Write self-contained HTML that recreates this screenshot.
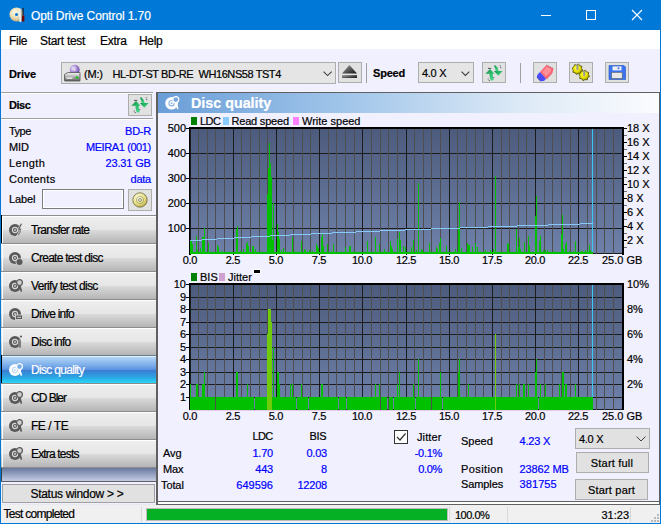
<!DOCTYPE html><html><head><meta charset="utf-8"><style>
html,body{margin:0;padding:0;width:661px;height:524px;overflow:hidden;background:#f0f0ff;position:relative;font-family:"Liberation Sans",sans-serif}
.t{position:absolute;white-space:nowrap;line-height:1;-webkit-text-stroke:0.2px currentColor}
svg{display:block}
</style></head><body>
<div style="position:absolute;left:0px;top:0px;width:661px;height:30px;background:#0078d7"></div>
<svg style="position:absolute;left:5px;top:3px" width="24" height="24" viewBox="0 0 24 24"><defs><radialGradient id="cdg" cx="40%" cy="35%" r="70%"><stop offset="0" stop-color="#fffbe8"/><stop offset="0.55" stop-color="#eadbb0"/><stop offset="1" stop-color="#c0a870"/></radialGradient></defs>
<circle cx="11.5" cy="11.5" r="7" fill="url(#cdg)"/>
<path d="M11.5 4.5 L13 11.5 L11.5 18.5 Z" fill="#fff8e0" opacity="0.5"/>
<circle cx="11.5" cy="11.5" r="1.5" fill="#0078d7"/>
<path d="M13.4 6 L15.8 5.6 L16.2 19 L14.4 19 Z" fill="#ececec"/>
<path d="M15.8 5.6 L16.6 5.6 L16.8 19 L16.2 19 Z" fill="#9a9a9a"/>
<rect x="17.3" y="5" width="1.6" height="7.5" fill="#203050"/>
<rect x="17" y="12.5" width="2.4" height="6" fill="#700808"/></svg>
<div class="t" style="top:9.84px;font-size:12px;color:#fff;letter-spacing:-0.1px;left:31px;">Opti Drive Control 1.70</div>
<div style="position:absolute;left:541px;top:15px;width:10px;height:1px;background:#fff"></div>
<div style="position:absolute;left:586px;top:10px;width:10px;height:10px;border:1px solid #fff;box-sizing:border-box"></div>
<svg style="position:absolute;left:631px;top:9px" width="12" height="12" viewBox="0 0 12 12"><path d="M1 1L11 11M11 1L1 11" stroke="#fff" stroke-width="1.1"/></svg>
<div style="position:absolute;left:1px;top:30px;width:659px;height:19px;background:#fff"></div>
<div class="t" style="top:34.84px;font-size:12px;color:#000;letter-spacing:-0.3px;left:9px;">File</div>
<div class="t" style="top:34.84px;font-size:12px;color:#000;letter-spacing:-0.3px;left:40px;">Start test</div>
<div class="t" style="top:34.84px;font-size:12px;color:#000;letter-spacing:-0.3px;left:100px;">Extra</div>
<div class="t" style="top:34.84px;font-size:12px;color:#000;letter-spacing:-0.3px;left:139px;">Help</div>
<div style="position:absolute;left:1px;top:49px;width:659px;height:43px;background:#f0f0ff"></div>
<div class="t" style="top:68.89px;font-size:11px;color:#000;font-weight:bold;letter-spacing:-0.1px;left:9px;">Drive</div>
<div style="position:absolute;left:61px;top:62px;width:275px;height:22px;background:#e5e5e5;border:1px solid #adadad;box-sizing:border-box"></div>
<svg style="position:absolute;left:62px;top:63px" width="20" height="20" viewBox="0 0 20 20"><defs><linearGradient id="drv" x1="0" y1="0" x2="0" y2="1"><stop offset="0" stop-color="#f8f8f8"/><stop offset="0.5" stop-color="#b0b0b0"/><stop offset="1" stop-color="#606060"/></linearGradient>
<radialGradient id="pd" cx="35%" cy="35%" r="70%"><stop offset="0" stop-color="#f0e8ff"/><stop offset="0.6" stop-color="#a080d0"/><stop offset="1" stop-color="#6850a0"/></radialGradient></defs>
<circle cx="12.7" cy="6.8" r="5" fill="url(#pd)"/><circle cx="12.7" cy="6.8" r="1" fill="#e5e5e5"/>
<path d="M3 11 L6 9.5 L18 9.5 L18 17.5 Q18 18 17.5 18 L3 18 Q2.5 18 2.5 17.5 L2.5 11.5 Z" fill="url(#drv)" stroke="#505050" stroke-width="0.8"/>
<rect x="4.5" y="14.5" width="6" height="1.2" fill="#fff"/>
<path d="M14.5 13h1v1h1v1h-1v1h-1v-1h-1v-1h1z" fill="#10c010"/></svg>
<div class="t" style="top:68.69px;font-size:11px;color:#000;letter-spacing:-0.2px;left:84px;">(M:)</div>
<div class="t" style="top:68.69px;font-size:11px;color:#000;letter-spacing:-0.42px;left:112.5px;">HL-DT-ST BD-RE&nbsp; WH16NS58 TST4</div>
<svg style="position:absolute;left:322.5px;top:71.2px" width="10" height="6" viewBox="0 0 10 6"><path d="M0.5 0.6L4.6 4.6L8.7 0.6" stroke="#404040" fill="none" stroke-width="1.1"/></svg>
<div style="position:absolute;left:338px;top:62px;width:24px;height:21px;background:#e1e1e1;border:1px solid #adadad;box-sizing:border-box"></div>
<svg style="position:absolute;left:338px;top:62px" width="24" height="21" viewBox="0 0 24 21"><defs><linearGradient id="ej" x1="0" y1="0" x2="1" y2="1"><stop offset="0" stop-color="#a8a8a8"/><stop offset="1" stop-color="#101010"/></linearGradient></defs>
<path d="M11.4 3 L19 11.4 H4 Z" fill="url(#ej)"/><rect x="4" y="13" width="15" height="3" fill="url(#ej)"/></svg>
<div style="position:absolute;left:366px;top:63px;width:1px;height:20px;background:#a0a0a0"></div>
<div class="t" style="top:68.39px;font-size:11px;color:#000;font-weight:bold;letter-spacing:-0.2px;left:373px;">Speed</div>
<div style="position:absolute;left:418px;top:62px;width:56px;height:21px;background:#e5e5e5;border:1px solid #adadad;box-sizing:border-box"></div>
<div class="t" style="top:67.69px;font-size:11px;color:#000;letter-spacing:-0.3px;left:422px;">4.0 X</div>
<svg style="position:absolute;left:460.6px;top:70.6px" width="10" height="6" viewBox="0 0 10 6"><path d="M0.5 0.6L4.4 4.4L8.3 0.6" stroke="#404040" fill="none" stroke-width="1.1"/></svg>
<div style="position:absolute;left:482px;top:62px;width:24px;height:21px;background:#e1e1e1;border:1px solid #adadad;box-sizing:border-box"></div>
<svg style="position:absolute;left:482px;top:62px" width="24" height="22" viewBox="0 0 24 22"><defs><linearGradient id="rf1" x1="0" y1="0" x2="1" y2="1"><stop offset="0" stop-color="#128048"/><stop offset="0.45" stop-color="#2ab868"/><stop offset="1" stop-color="#48e090"/></linearGradient></defs>
<path d="M3.4 11.8 L8 7 L12.6 11.8 L10.6 11.8 Q10.8 15 11.8 18.2 L8.8 18.4 Q7.4 15 7.4 11.8 Z" fill="url(#rf1)"/>
<path d="M12 9 L20.6 9 L16.3 13.8 Z" fill="url(#rf1)"/>
<path d="M12.6 3 Q16 4.4 16.6 9.2 L13.8 9.2 Q13.4 6.4 12.2 4.2 Z" fill="url(#rf1)"/>
<path d="M6 6.4 h3.2" stroke="#303030" stroke-width="0.8"/>
<circle cx="18.2" cy="3.8" r="0.55" fill="#404040"/><circle cx="18.8" cy="5.6" r="0.55" fill="#404040"/>
<circle cx="6.2" cy="17" r="0.55" fill="#404040"/><circle cx="7.2" cy="18.6" r="0.55" fill="#404040"/><circle cx="11.8" cy="15.6" r="0.55" fill="#404040"/></svg>
<div style="position:absolute;left:520px;top:63px;width:1px;height:20px;background:#a0a0a0"></div>
<div style="position:absolute;left:533px;top:62px;width:24px;height:21px;background:#e1e1e1;border:1px solid #adadad;box-sizing:border-box"></div>
<svg style="position:absolute;left:533px;top:62px" width="24" height="21" viewBox="0 0 24 21"><path d="M7 10 L13.5 3 L20.5 6.5 L19.5 10.5 L13 16.8 Z" fill="#ff6474"/>
<path d="M9.2 10 L13.8 4.8 L18.4 7.2 L17.4 10 L13 14.4 Z" fill="#ff9098"/>
<path d="M13 16.8 L19.5 10.5 L20.5 6.5 L19 11.8 L13.5 17.5 Z" fill="#e85060"/>
<path d="M4 13.2 L7 10 L13 16.8 L11 19 L7.2 19.2 L4 15.6 Z" fill="#4a4af8"/>
<path d="M13.5 3 L20.5 6.5" stroke="#505050" stroke-width="0.6" stroke-dasharray="1 1"/>
<path d="M4 15.6 L7.2 19.2" stroke="#404040" stroke-width="0.6" stroke-dasharray="1 1"/></svg>
<div style="position:absolute;left:569px;top:62px;width:24px;height:21px;background:#e1e1e1;border:1px solid #adadad;box-sizing:border-box"></div>
<svg style="position:absolute;left:569px;top:62px" width="24" height="21" viewBox="0 0 24 21"><defs><radialGradient id="gy" cx="40%" cy="35%" r="65%"><stop offset="0" stop-color="#ffff40"/><stop offset="0.6" stop-color="#e8e000"/><stop offset="1" stop-color="#8c8800"/></radialGradient></defs><polygon points="13.69,8.27 11.88,9.55 11.38,11.70 9.20,11.32 7.33,12.49 6.05,10.68 3.90,10.18 4.28,8.00 3.11,6.13 4.92,4.85 5.42,2.70 7.60,3.08 9.47,1.91 10.75,3.72 12.90,4.22 12.52,6.40" fill="url(#gy)" stroke="#505000" stroke-width="0.8"/><path d="M7.300000000000001 2.6000000000000005 L9.5 2.6000000000000005 L9.3 8.0 L7.5 8.0 Z" fill="#9a9a9a"/><polygon points="20.49,14.47 18.68,15.75 18.18,17.90 16.00,17.52 14.13,18.69 12.85,16.88 10.70,16.38 11.08,14.20 9.91,12.33 11.72,11.05 12.22,8.90 14.40,9.28 16.27,8.11 17.55,9.92 19.70,10.42 19.32,12.60" fill="url(#gy)" stroke="#505000" stroke-width="0.8"/><path d="M14.1 8.8 L16.3 8.8 L16.099999999999998 14.200000000000001 L14.299999999999999 14.200000000000001 Z" fill="#9a9a9a"/></svg>
<div style="position:absolute;left:605px;top:62px;width:24px;height:21px;background:#e1e1e1;border:1px solid #adadad;box-sizing:border-box"></div>
<svg style="position:absolute;left:605px;top:62px" width="24" height="21" viewBox="0 0 24 21"><path d="M4 3.5 L19 3.5 L20.5 5 L20.5 17.5 L4 17.5 Z" fill="#3a74f0" stroke="#2050c0" stroke-width="0.6"/>
<rect x="7.5" y="4.4" width="9" height="4" fill="#f0f0f0"/><circle cx="13.5" cy="6.3" r="1" fill="#3a74f0"/>
<rect x="6.7" y="10.4" width="10.5" height="6" fill="#e8e8e8" stroke="#606060" stroke-width="0.6"/></svg>
<div style="position:absolute;left:1px;top:92px;width:155px;height:412px;background:#f0f0ff"></div>
<div style="position:absolute;left:1px;top:92px;width:152px;height:1px;background:#a0a0a0"></div>
<div style="position:absolute;left:1px;top:93px;width:152px;height:1px;background:#fff"></div>
<div class="t" style="top:100.19px;font-size:11px;color:#000;font-weight:bold;letter-spacing:-0.45px;left:9px;">Disc</div>
<div style="position:absolute;left:128px;top:94px;width:24px;height:22px;background:#e1e1e1;border:1px solid #adadad;box-sizing:border-box"></div>
<svg style="position:absolute;left:128px;top:94px" width="24" height="22" viewBox="0 0 24 22"><defs><linearGradient id="rf2" x1="0" y1="0" x2="1" y2="1"><stop offset="0" stop-color="#128048"/><stop offset="0.45" stop-color="#2ab868"/><stop offset="1" stop-color="#48e090"/></linearGradient></defs>
<path d="M3.4 11.8 L8 7 L12.6 11.8 L10.6 11.8 Q10.8 15 11.8 18.2 L8.8 18.4 Q7.4 15 7.4 11.8 Z" fill="url(#rf2)"/>
<path d="M12 9 L20.6 9 L16.3 13.8 Z" fill="url(#rf2)"/>
<path d="M12.6 3 Q16 4.4 16.6 9.2 L13.8 9.2 Q13.4 6.4 12.2 4.2 Z" fill="url(#rf2)"/>
<path d="M6 6.4 h3.2" stroke="#303030" stroke-width="0.8"/>
<circle cx="18.2" cy="3.8" r="0.55" fill="#404040"/><circle cx="18.8" cy="5.6" r="0.55" fill="#404040"/>
<circle cx="6.2" cy="17" r="0.55" fill="#404040"/><circle cx="7.2" cy="18.6" r="0.55" fill="#404040"/><circle cx="11.8" cy="15.6" r="0.55" fill="#404040"/></svg>
<div style="position:absolute;left:1px;top:118px;width:152px;height:1px;background:#a0a0a0"></div>
<div style="position:absolute;left:1px;top:119px;width:152px;height:1px;background:#fff"></div>
<div class="t" style="top:125.69px;font-size:11px;color:#000;letter-spacing:-0.5px;left:9px;">Type</div>
<div class="t" style="top:125.69px;font-size:11px;color:#0000ff;letter-spacing:-0.3px;right:510.2px;text-align:right;">BD-R</div>
<div class="t" style="top:141.69px;font-size:11px;color:#000;letter-spacing:-0.1px;left:9px;">MID</div>
<div class="t" style="top:141.69px;font-size:11px;color:#0000ff;letter-spacing:-0.4px;right:510.2px;text-align:right;">MEIRA1 (001)</div>
<div class="t" style="top:158.49px;font-size:11px;color:#000;letter-spacing:0.45px;left:9px;">Length</div>
<div class="t" style="top:158.49px;font-size:11px;color:#0000ff;letter-spacing:-0.15px;right:510.2px;text-align:right;">23.31 GB</div>
<div class="t" style="top:174.49px;font-size:11px;color:#000;letter-spacing:0.3px;left:9px;">Contents</div>
<div class="t" style="top:174.49px;font-size:11px;color:#0000ff;letter-spacing:-0.3px;right:510.2px;text-align:right;">data</div>
<div class="t" style="top:193.69px;font-size:11px;color:#000;letter-spacing:-0.1px;left:9px;">Label</div>
<div style="position:absolute;left:42px;top:189px;width:82px;height:20px;background:#f0f0ff;border:1px solid #7c7c7c;box-shadow:inset 0 0 0 1px #fff;box-sizing:border-box"></div>
<div style="position:absolute;left:128px;top:189px;width:24px;height:22px;background:#e1e1e1;border:1px solid #adadad;box-sizing:border-box"></div>
<svg style="position:absolute;left:128px;top:189px" width="24" height="22" viewBox="0 0 24 22"><defs><radialGradient id="ycd" cx="40%" cy="35%" r="70%"><stop offset="0" stop-color="#fffff0"/><stop offset="0.6" stop-color="#e8e088"/><stop offset="1" stop-color="#b0a040"/></radialGradient></defs>
<circle cx="12" cy="11" r="7.2" fill="url(#ycd)" stroke="#606030" stroke-width="0.7"/>
<circle cx="12" cy="11" r="3.6" fill="none" stroke="#8a8a40" stroke-width="0.6"/>
<circle cx="12" cy="11" r="1.5" fill="#e1e1e1" stroke="#606030" stroke-width="0.6"/></svg>
<div style="position:absolute;left:1px;top:215px;width:155px;height:1px;background:#8c8c8c"></div>
<div style="position:absolute;left:1px;top:216px;width:155px;height:1px;background:#fff"></div>
<div style="position:absolute;left:1px;top:217px;width:155px;height:26px;background:linear-gradient(#eeeeee 0%,#e6e6e6 48%,#d9d9d9 52%,#b5b5b5 100%)"></div>
<div style="position:absolute;left:2px;top:216px;width:1px;height:27px;background:#fff"></div>
<div style="position:absolute;left:1px;top:215px;width:1px;height:28px;background:#000"></div>
<svg style="position:absolute;left:7.5px;top:221.5px" width="16" height="16" viewBox="0 0 16 16"><circle cx="7" cy="8" r="6" fill="#5a5a5a"/><circle cx="7" cy="8" r="2.6" fill="none" stroke="#d8d8d8" stroke-width="1.1"/><circle cx="7" cy="8" r="0.9" fill="#d8d8d8"/><path d="M12.5 1.5 L9.5 8 L11.5 8 L8.5 14.5 L14 6.5 L12 6.5 L14.5 1.5 Z" fill="#5a5a5a" stroke="#e8e8e8" stroke-width="0.6"/></svg>
<div class="t" style="top:223.84px;font-size:12px;color:#000;letter-spacing:-0.77px;left:31px;">Transfer rate</div>
<div style="position:absolute;left:1px;top:243px;width:155px;height:1px;background:#8c8c8c"></div>
<div style="position:absolute;left:1px;top:244px;width:155px;height:1px;background:#fff"></div>
<div style="position:absolute;left:1px;top:245px;width:155px;height:26px;background:linear-gradient(#eeeeee 0%,#e6e6e6 48%,#d9d9d9 52%,#b5b5b5 100%)"></div>
<div style="position:absolute;left:2px;top:244px;width:1px;height:27px;background:#fff"></div>
<svg style="position:absolute;left:7.5px;top:249.5px" width="16" height="16" viewBox="0 0 16 16"><circle cx="7" cy="8" r="6" fill="#5a5a5a"/><circle cx="7" cy="8" r="2.6" fill="none" stroke="#d8d8d8" stroke-width="1.1"/><circle cx="7" cy="8" r="0.9" fill="#d8d8d8"/><circle cx="11.5" cy="12" r="3.6" fill="#5a5a5a" stroke="#e0e0e0" stroke-width="0.8"/></svg>
<div class="t" style="top:251.84px;font-size:12px;color:#000;letter-spacing:-0.73px;left:31px;">Create test disc</div>
<div style="position:absolute;left:1px;top:271px;width:155px;height:1px;background:#8c8c8c"></div>
<div style="position:absolute;left:1px;top:272px;width:155px;height:1px;background:#fff"></div>
<div style="position:absolute;left:1px;top:273px;width:155px;height:26px;background:linear-gradient(#eeeeee 0%,#e6e6e6 48%,#d9d9d9 52%,#b5b5b5 100%)"></div>
<div style="position:absolute;left:2px;top:272px;width:1px;height:27px;background:#fff"></div>
<svg style="position:absolute;left:7.5px;top:277.5px" width="16" height="16" viewBox="0 0 16 16"><circle cx="7" cy="8" r="6" fill="#5a5a5a"/><circle cx="7" cy="8" r="2.6" fill="none" stroke="#d8d8d8" stroke-width="1.1"/><circle cx="7" cy="8" r="0.9" fill="#d8d8d8"/><path d="M11.6 7 L13.4 13.6" stroke="#5a5a5a" stroke-width="1.7"/><circle cx="11.5" cy="4.6" r="2.9" fill="#d0d0d0" stroke="#5a5a5a" stroke-width="1.2"/></svg>
<div class="t" style="top:279.84px;font-size:12px;color:#000;letter-spacing:-0.67px;left:31px;">Verify test disc</div>
<div style="position:absolute;left:1px;top:299px;width:155px;height:1px;background:#8c8c8c"></div>
<div style="position:absolute;left:1px;top:300px;width:155px;height:1px;background:#fff"></div>
<div style="position:absolute;left:1px;top:301px;width:155px;height:26px;background:linear-gradient(#eeeeee 0%,#e6e6e6 48%,#d9d9d9 52%,#b5b5b5 100%)"></div>
<div style="position:absolute;left:2px;top:300px;width:1px;height:27px;background:#fff"></div>
<svg style="position:absolute;left:7.5px;top:305.5px" width="16" height="16" viewBox="0 0 16 16"><circle cx="7" cy="8" r="6" fill="#5a5a5a"/><circle cx="7" cy="8" r="2.6" fill="none" stroke="#d8d8d8" stroke-width="1.1"/><circle cx="7" cy="8" r="0.9" fill="#d8d8d8"/><rect x="7.5" y="9" width="7" height="4.5" fill="#5a5a5a" stroke="#e0e0e0" stroke-width="0.8"/><rect x="9" y="10.8" width="4" height="0.9" fill="#e0e0e0"/></svg>
<div class="t" style="top:307.84px;font-size:12px;color:#000;letter-spacing:-0.77px;left:31px;">Drive info</div>
<div style="position:absolute;left:1px;top:327px;width:155px;height:1px;background:#8c8c8c"></div>
<div style="position:absolute;left:1px;top:328px;width:155px;height:1px;background:#fff"></div>
<div style="position:absolute;left:1px;top:329px;width:155px;height:26px;background:linear-gradient(#eeeeee 0%,#e6e6e6 48%,#d9d9d9 52%,#b5b5b5 100%)"></div>
<div style="position:absolute;left:2px;top:328px;width:1px;height:27px;background:#fff"></div>
<svg style="position:absolute;left:7.5px;top:333.5px" width="16" height="16" viewBox="0 0 16 16"><circle cx="7" cy="8" r="6" fill="#5a5a5a"/><circle cx="7" cy="8" r="2.6" fill="none" stroke="#d8d8d8" stroke-width="1.1"/><circle cx="7" cy="8" r="0.9" fill="#d8d8d8"/><rect x="11" y="6" width="2" height="8" fill="#5a5a5a" stroke="#e0e0e0" stroke-width="0.5"/><circle cx="13" cy="2.5" r="1.1" fill="#5a5a5a"/></svg>
<div class="t" style="top:335.84px;font-size:12px;color:#000;letter-spacing:-0.72px;left:31px;">Disc info</div>
<div style="position:absolute;left:1px;top:355px;width:155px;height:1px;background:#6a7a90"></div>
<div style="position:absolute;left:1px;top:356px;width:155px;height:1px;background:#e0f4ff"></div>
<div style="position:absolute;left:1px;top:357px;width:155px;height:26px;background:linear-gradient(#b2d6f6 0%,#7fb0ea 30%,#5c94e2 48%,#3a7ed2 52%,#2aa6e4 78%,#2ad8f8 100%)"></div>
<div style="position:absolute;left:1px;top:355px;width:1px;height:28px;background:#000"></div>
<svg style="position:absolute;left:7.5px;top:361.5px" width="16" height="16" viewBox="0 0 16 16"><circle cx="7" cy="8" r="6" fill="#ffffff"/><circle cx="7" cy="8" r="2.6" fill="none" stroke="#c0d8f4" stroke-width="1.1"/><circle cx="7" cy="8" r="0.9" fill="#c0d8f4"/><path d="M11.6 7 L13.4 13.6" stroke="#ffffff" stroke-width="1.7"/><circle cx="11.5" cy="4.6" r="2.9" fill="#7aaae4" stroke="#ffffff" stroke-width="1.2"/></svg>
<div class="t" style="top:363.84px;font-size:12px;color:#fff;letter-spacing:-0.69px;left:31px;">Disc quality</div>
<div style="position:absolute;left:1px;top:383px;width:155px;height:1px;background:#8c8c8c"></div>
<div style="position:absolute;left:1px;top:384px;width:155px;height:1px;background:#fff"></div>
<div style="position:absolute;left:1px;top:385px;width:155px;height:26px;background:linear-gradient(#eeeeee 0%,#e6e6e6 48%,#d9d9d9 52%,#b5b5b5 100%)"></div>
<div style="position:absolute;left:2px;top:384px;width:1px;height:27px;background:#fff"></div>
<svg style="position:absolute;left:7.5px;top:389.5px" width="16" height="16" viewBox="0 0 16 16"><circle cx="7" cy="8" r="6" fill="#5a5a5a"/><circle cx="7" cy="8" r="2.6" fill="none" stroke="#d8d8d8" stroke-width="1.1"/><circle cx="7" cy="8" r="0.9" fill="#d8d8d8"/><path d="M11.6 7 L13.4 13.6" stroke="#5a5a5a" stroke-width="1.7"/><circle cx="11.5" cy="4.6" r="2.9" fill="#d0d0d0" stroke="#5a5a5a" stroke-width="1.2"/></svg>
<div class="t" style="top:391.84px;font-size:12px;color:#000;letter-spacing:-1.0px;left:31px;">CD Bler</div>
<div style="position:absolute;left:1px;top:411px;width:155px;height:1px;background:#8c8c8c"></div>
<div style="position:absolute;left:1px;top:412px;width:155px;height:1px;background:#fff"></div>
<div style="position:absolute;left:1px;top:413px;width:155px;height:26px;background:linear-gradient(#eeeeee 0%,#e6e6e6 48%,#d9d9d9 52%,#b5b5b5 100%)"></div>
<div style="position:absolute;left:2px;top:412px;width:1px;height:27px;background:#fff"></div>
<svg style="position:absolute;left:7.5px;top:417.5px" width="16" height="16" viewBox="0 0 16 16"><circle cx="7" cy="8" r="6" fill="#5a5a5a"/><circle cx="7" cy="8" r="2.6" fill="none" stroke="#d8d8d8" stroke-width="1.1"/><circle cx="7" cy="8" r="0.9" fill="#d8d8d8"/><path d="M11.6 7 L13.4 13.6" stroke="#5a5a5a" stroke-width="1.7"/><circle cx="11.5" cy="4.6" r="2.9" fill="#d0d0d0" stroke="#5a5a5a" stroke-width="1.2"/></svg>
<div class="t" style="top:419.84px;font-size:12px;color:#000;letter-spacing:-0.47px;left:31px;">FE / TE</div>
<div style="position:absolute;left:1px;top:439px;width:155px;height:1px;background:#8c8c8c"></div>
<div style="position:absolute;left:1px;top:440px;width:155px;height:1px;background:#fff"></div>
<div style="position:absolute;left:1px;top:441px;width:155px;height:26px;background:linear-gradient(#eeeeee 0%,#e6e6e6 48%,#d9d9d9 52%,#b5b5b5 100%)"></div>
<div style="position:absolute;left:2px;top:440px;width:1px;height:27px;background:#fff"></div>
<svg style="position:absolute;left:7.5px;top:445.5px" width="16" height="16" viewBox="0 0 16 16"><circle cx="7" cy="8" r="6" fill="#5a5a5a"/><circle cx="7" cy="8" r="2.6" fill="none" stroke="#d8d8d8" stroke-width="1.1"/><circle cx="7" cy="8" r="0.9" fill="#d8d8d8"/><path d="M11.6 7 L13.4 13.6" stroke="#5a5a5a" stroke-width="1.7"/><circle cx="11.5" cy="4.6" r="2.9" fill="#d0d0d0" stroke="#5a5a5a" stroke-width="1.2"/></svg>
<div class="t" style="top:447.84px;font-size:12px;color:#000;letter-spacing:-0.83px;left:31px;">Extra tests</div>
<div style="position:absolute;left:1px;top:467px;width:155px;height:1px;background:#8c8c8c"></div>
<div style="position:absolute;left:1px;top:468px;width:155px;height:13px;background:linear-gradient(#6878a0,#c4cce4)"></div>
<div style="position:absolute;left:1px;top:468px;width:1px;height:13px;background:#404040"></div>
<div style="position:absolute;left:1px;top:481px;width:155px;height:1px;background:#606060"></div>
<div style="position:absolute;left:2px;top:484px;width:153px;height:19px;background:#e1e1e1;border:1px solid #a0a0a0;box-sizing:border-box"></div>
<div class="t" style="top:488.14px;font-size:12px;color:#000;letter-spacing:-0.3px;left:30.5px;">Status window &gt; &gt;</div>
<div style="position:absolute;left:156px;top:92px;width:504px;height:413px;background:#f0f0ff"></div>
<div style="position:absolute;left:156px;top:92px;width:2px;height:413px;background:#606060"></div>
<div style="position:absolute;left:156px;top:92px;width:504px;height:1px;background:#606060"></div>
<div style="position:absolute;left:659px;top:92px;width:1px;height:413px;background:#606060"></div>
<div style="position:absolute;left:156px;top:501px;width:504px;height:1px;background:#606060"></div>
<div style="position:absolute;left:158px;top:502px;width:501px;height:2px;background:#fff"></div>
<div style="position:absolute;left:156px;top:504px;width:504px;height:1px;background:#606060"></div>
<div style="position:absolute;left:158px;top:93px;width:501px;height:20px;background:linear-gradient(90deg,#6a9ed8 0%,#a2c6ea 38%,#dce9f6 72%,#fbfcfe 100%)"></div>
<svg style="position:absolute;left:163px;top:95px" width="18" height="18" viewBox="0 0 18 18"><circle cx="8.6" cy="8.2" r="6.3" fill="#fff"/><circle cx="8.6" cy="8.2" r="2.7" fill="none" stroke="#8cb6e6" stroke-width="1.1"/><circle cx="8.6" cy="8.2" r="0.9" fill="#8cb6e6"/><path d="M13 7.5 L14.8 14" stroke="#fff" stroke-width="1.6"/><circle cx="12.8" cy="4.6" r="3" fill="#7aa8de" stroke="#fff" stroke-width="1.2"/></svg>
<div class="t" style="top:96.40px;font-size:14.3px;color:#fff;font-weight:bold;left:191px;">Disc quality</div>
<svg style="position:absolute;left:0;top:0" width="661" height="524" viewBox="0 0 661 524" shape-rendering="crispEdges">
<defs>
<linearGradient id="pbg" x1="0" y1="0" x2="0" y2="1"><stop offset="0" stop-color="#4c5b7c"/><stop offset="1" stop-color="#6f81aa"/></linearGradient>
</defs>
<rect x="190" y="127" width="433" height="127" fill="url(#pbg)"/>
<rect x="190" y="228" width="433" height="1" fill="#1c1c1c"/>
<rect x="190" y="203" width="433" height="1" fill="#1c1c1c"/>
<rect x="190" y="178" width="433" height="1" fill="#1c1c1c"/>
<rect x="190" y="153" width="433" height="1" fill="#1c1c1c"/>
<rect x="190" y="253" width="433" height="1" fill="#1c1c1c"/>
<rect x="190" y="127" width="1" height="127" fill="#1c1c1c"/>
<rect x="198" y="127" width="1" height="127" fill="#4e4e4e"/>
<rect x="207" y="127" width="1" height="127" fill="#4e4e4e"/>
<rect x="215" y="127" width="1" height="127" fill="#4e4e4e"/>
<rect x="224" y="127" width="1" height="127" fill="#4e4e4e"/>
<rect x="233" y="127" width="1" height="127" fill="#1c1c1c"/>
<rect x="241" y="127" width="1" height="127" fill="#4e4e4e"/>
<rect x="250" y="127" width="1" height="127" fill="#4e4e4e"/>
<rect x="259" y="127" width="1" height="127" fill="#4e4e4e"/>
<rect x="267" y="127" width="1" height="127" fill="#4e4e4e"/>
<rect x="276" y="127" width="1" height="127" fill="#1c1c1c"/>
<rect x="285" y="127" width="1" height="127" fill="#4e4e4e"/>
<rect x="293" y="127" width="1" height="127" fill="#4e4e4e"/>
<rect x="302" y="127" width="1" height="127" fill="#4e4e4e"/>
<rect x="310" y="127" width="1" height="127" fill="#4e4e4e"/>
<rect x="319" y="127" width="1" height="127" fill="#1c1c1c"/>
<rect x="328" y="127" width="1" height="127" fill="#4e4e4e"/>
<rect x="336" y="127" width="1" height="127" fill="#4e4e4e"/>
<rect x="345" y="127" width="1" height="127" fill="#4e4e4e"/>
<rect x="354" y="127" width="1" height="127" fill="#4e4e4e"/>
<rect x="362" y="127" width="1" height="127" fill="#1c1c1c"/>
<rect x="371" y="127" width="1" height="127" fill="#4e4e4e"/>
<rect x="380" y="127" width="1" height="127" fill="#4e4e4e"/>
<rect x="388" y="127" width="1" height="127" fill="#4e4e4e"/>
<rect x="397" y="127" width="1" height="127" fill="#4e4e4e"/>
<rect x="406" y="127" width="1" height="127" fill="#1c1c1c"/>
<rect x="414" y="127" width="1" height="127" fill="#4e4e4e"/>
<rect x="423" y="127" width="1" height="127" fill="#4e4e4e"/>
<rect x="431" y="127" width="1" height="127" fill="#4e4e4e"/>
<rect x="440" y="127" width="1" height="127" fill="#4e4e4e"/>
<rect x="449" y="127" width="1" height="127" fill="#1c1c1c"/>
<rect x="457" y="127" width="1" height="127" fill="#4e4e4e"/>
<rect x="466" y="127" width="1" height="127" fill="#4e4e4e"/>
<rect x="475" y="127" width="1" height="127" fill="#4e4e4e"/>
<rect x="483" y="127" width="1" height="127" fill="#4e4e4e"/>
<rect x="492" y="127" width="1" height="127" fill="#1c1c1c"/>
<rect x="501" y="127" width="1" height="127" fill="#4e4e4e"/>
<rect x="509" y="127" width="1" height="127" fill="#4e4e4e"/>
<rect x="518" y="127" width="1" height="127" fill="#4e4e4e"/>
<rect x="526" y="127" width="1" height="127" fill="#4e4e4e"/>
<rect x="535" y="127" width="1" height="127" fill="#1c1c1c"/>
<rect x="544" y="127" width="1" height="127" fill="#4e4e4e"/>
<rect x="552" y="127" width="1" height="127" fill="#4e4e4e"/>
<rect x="561" y="127" width="1" height="127" fill="#4e4e4e"/>
<rect x="570" y="127" width="1" height="127" fill="#4e4e4e"/>
<rect x="578" y="127" width="1" height="127" fill="#1c1c1c"/>
<rect x="587" y="127" width="1" height="127" fill="#4e4e4e"/>
<rect x="596" y="127" width="1" height="127" fill="#4e4e4e"/>
<rect x="604" y="127" width="1" height="127" fill="#4e4e4e"/>
<rect x="613" y="127" width="1" height="127" fill="#4e4e4e"/>
<rect x="592" y="129" width="1" height="125" fill="#38c8f0"/>
<rect x="190" y="252" width="403" height="2" fill="#00c000"/>
<rect x="190" y="241" width="1" height="13" fill="#00c000"/>
<rect x="191" y="241" width="1" height="13" fill="#00c000"/>
<rect x="192" y="244" width="1" height="10" fill="#00c000"/>
<rect x="196" y="236" width="1" height="18" fill="#00c000"/>
<rect x="197" y="250" width="1" height="4" fill="#00c000"/>
<rect x="200" y="248" width="1" height="6" fill="#00c000"/>
<rect x="202" y="237" width="1" height="17" fill="#00c000"/>
<rect x="203" y="237" width="1" height="17" fill="#00c000"/>
<rect x="204" y="228" width="1" height="26" fill="#00c000"/>
<rect x="208" y="243" width="1" height="11" fill="#00c000"/>
<rect x="217" y="245" width="1" height="9" fill="#00c000"/>
<rect x="218" y="247" width="1" height="7" fill="#00c000"/>
<rect x="222" y="251" width="1" height="3" fill="#00c000"/>
<rect x="236" y="229" width="1" height="25" fill="#00c000"/>
<rect x="237" y="226" width="1" height="28" fill="#00c000"/>
<rect x="240" y="251" width="1" height="3" fill="#00c000"/>
<rect x="243" y="249" width="1" height="5" fill="#00c000"/>
<rect x="246" y="244" width="1" height="10" fill="#00c000"/>
<rect x="247" y="242" width="1" height="12" fill="#00c000"/>
<rect x="248" y="246" width="1" height="8" fill="#00c000"/>
<rect x="252" y="246" width="1" height="8" fill="#00c000"/>
<rect x="253" y="246" width="1" height="8" fill="#00c000"/>
<rect x="255" y="249" width="1" height="5" fill="#00c000"/>
<rect x="267" y="194" width="1" height="60" fill="#00c000"/>
<rect x="268" y="168" width="1" height="86" fill="#00c000"/>
<rect x="269" y="143" width="1" height="111" fill="#00c000"/>
<rect x="270" y="163" width="1" height="91" fill="#00c000"/>
<rect x="271" y="177" width="1" height="77" fill="#00c000"/>
<rect x="272" y="240" width="1" height="14" fill="#00c000"/>
<rect x="273" y="203" width="1" height="51" fill="#00c000"/>
<rect x="277" y="224" width="1" height="30" fill="#00c000"/>
<rect x="278" y="232" width="1" height="22" fill="#00c000"/>
<rect x="279" y="239" width="1" height="15" fill="#00c000"/>
<rect x="281" y="250" width="1" height="4" fill="#00c000"/>
<rect x="283" y="248" width="1" height="6" fill="#00c000"/>
<rect x="285" y="251" width="1" height="3" fill="#00c000"/>
<rect x="292" y="237" width="1" height="17" fill="#00c000"/>
<rect x="294" y="251" width="1" height="3" fill="#00c000"/>
<rect x="301" y="241" width="1" height="13" fill="#00c000"/>
<rect x="304" y="249" width="1" height="5" fill="#00c000"/>
<rect x="305" y="250" width="1" height="4" fill="#00c000"/>
<rect x="309" y="250" width="1" height="4" fill="#00c000"/>
<rect x="312" y="251" width="1" height="3" fill="#00c000"/>
<rect x="316" y="244" width="1" height="10" fill="#00c000"/>
<rect x="317" y="246" width="1" height="8" fill="#00c000"/>
<rect x="318" y="248" width="1" height="6" fill="#00c000"/>
<rect x="321" y="237" width="1" height="17" fill="#00c000"/>
<rect x="322" y="234" width="1" height="20" fill="#00c000"/>
<rect x="323" y="246" width="1" height="8" fill="#00c000"/>
<rect x="327" y="244" width="1" height="10" fill="#00c000"/>
<rect x="331" y="251" width="1" height="3" fill="#00c000"/>
<rect x="333" y="244" width="1" height="10" fill="#00c000"/>
<rect x="345" y="247" width="1" height="7" fill="#00c000"/>
<rect x="349" y="246" width="1" height="8" fill="#00c000"/>
<rect x="350" y="246" width="1" height="8" fill="#00c000"/>
<rect x="353" y="251" width="1" height="3" fill="#00c000"/>
<rect x="367" y="241" width="1" height="13" fill="#00c000"/>
<rect x="375" y="237" width="1" height="17" fill="#00c000"/>
<rect x="379" y="244" width="1" height="10" fill="#00c000"/>
<rect x="384" y="249" width="1" height="5" fill="#00c000"/>
<rect x="390" y="241" width="1" height="13" fill="#00c000"/>
<rect x="391" y="246" width="1" height="8" fill="#00c000"/>
<rect x="392" y="249" width="1" height="5" fill="#00c000"/>
<rect x="397" y="239" width="1" height="15" fill="#00c000"/>
<rect x="399" y="232" width="1" height="22" fill="#00c000"/>
<rect x="400" y="240" width="1" height="14" fill="#00c000"/>
<rect x="403" y="246" width="1" height="8" fill="#00c000"/>
<rect x="405" y="247" width="1" height="7" fill="#00c000"/>
<rect x="411" y="247" width="1" height="7" fill="#00c000"/>
<rect x="413" y="240" width="1" height="14" fill="#00c000"/>
<rect x="416" y="250" width="1" height="4" fill="#00c000"/>
<rect x="418" y="183" width="1" height="71" fill="#00c000"/>
<rect x="421" y="249" width="1" height="5" fill="#00c000"/>
<rect x="422" y="250" width="1" height="4" fill="#00c000"/>
<rect x="425" y="252" width="1" height="2" fill="#00c000"/>
<rect x="429" y="243" width="1" height="11" fill="#00c000"/>
<rect x="436" y="247" width="1" height="7" fill="#00c000"/>
<rect x="437" y="249" width="1" height="5" fill="#00c000"/>
<rect x="439" y="243" width="1" height="11" fill="#00c000"/>
<rect x="440" y="238" width="1" height="16" fill="#00c000"/>
<rect x="446" y="246" width="1" height="8" fill="#00c000"/>
<rect x="455" y="249" width="1" height="5" fill="#00c000"/>
<rect x="458" y="227" width="1" height="27" fill="#00c000"/>
<rect x="459" y="202" width="1" height="52" fill="#00c000"/>
<rect x="461" y="248" width="1" height="6" fill="#00c000"/>
<rect x="467" y="243" width="1" height="11" fill="#00c000"/>
<rect x="468" y="245" width="1" height="9" fill="#00c000"/>
<rect x="469" y="245" width="1" height="9" fill="#00c000"/>
<rect x="472" y="247" width="1" height="7" fill="#00c000"/>
<rect x="475" y="243" width="1" height="11" fill="#00c000"/>
<rect x="477" y="247" width="1" height="7" fill="#00c000"/>
<rect x="485" y="250" width="1" height="4" fill="#00c000"/>
<rect x="490" y="250" width="1" height="4" fill="#00c000"/>
<rect x="493" y="249" width="1" height="5" fill="#00c000"/>
<rect x="495" y="176" width="1" height="78" fill="#00c000"/>
<rect x="507" y="243" width="1" height="11" fill="#00c000"/>
<rect x="508" y="244" width="1" height="10" fill="#00c000"/>
<rect x="516" y="229" width="1" height="25" fill="#00c000"/>
<rect x="518" y="247" width="1" height="7" fill="#00c000"/>
<rect x="519" y="238" width="1" height="16" fill="#00c000"/>
<rect x="520" y="249" width="1" height="5" fill="#00c000"/>
<rect x="524" y="242" width="1" height="12" fill="#00c000"/>
<rect x="528" y="236" width="1" height="18" fill="#00c000"/>
<rect x="529" y="246" width="1" height="8" fill="#00c000"/>
<rect x="535" y="216" width="1" height="38" fill="#00c000"/>
<rect x="536" y="196" width="1" height="58" fill="#00c000"/>
<rect x="539" y="241" width="1" height="13" fill="#00c000"/>
<rect x="540" y="236" width="1" height="18" fill="#00c000"/>
<rect x="543" y="250" width="1" height="4" fill="#00c000"/>
<rect x="545" y="250" width="1" height="4" fill="#00c000"/>
<rect x="547" y="250" width="1" height="4" fill="#00c000"/>
<rect x="554" y="251" width="1" height="3" fill="#00c000"/>
<rect x="561" y="234" width="1" height="20" fill="#00c000"/>
<rect x="562" y="215" width="1" height="39" fill="#00c000"/>
<rect x="563" y="249" width="1" height="5" fill="#00c000"/>
<rect x="565" y="244" width="1" height="10" fill="#00c000"/>
<rect x="566" y="242" width="1" height="12" fill="#00c000"/>
<rect x="569" y="251" width="1" height="3" fill="#00c000"/>
<rect x="573" y="251" width="1" height="3" fill="#00c000"/>
<rect x="575" y="241" width="1" height="13" fill="#00c000"/>
<rect x="582" y="251" width="1" height="3" fill="#00c000"/>
<rect x="585" y="250" width="1" height="4" fill="#00c000"/>
<rect x="581" y="251" width="1" height="3" fill="#00c000"/>
<rect x="587" y="250" width="1" height="4" fill="#00c000"/>
<rect x="589" y="245" width="1" height="9" fill="#00c000"/>
<rect x="590" y="250" width="1" height="4" fill="#00c000"/>
<rect x="190" y="240" width="12" height="1" fill="#88c8f4"/>
<rect x="202" y="239" width="15" height="1" fill="#88c8f4"/>
<rect x="217" y="238" width="17" height="1" fill="#88c8f4"/>
<rect x="234" y="237" width="17" height="1" fill="#88c8f4"/>
<rect x="251" y="236" width="19" height="1" fill="#88c8f4"/>
<rect x="270" y="235" width="20" height="1" fill="#88c8f4"/>
<rect x="290" y="234" width="21" height="1" fill="#88c8f4"/>
<rect x="311" y="233" width="21" height="1" fill="#88c8f4"/>
<rect x="332" y="232" width="24" height="1" fill="#88c8f4"/>
<rect x="356" y="231" width="24" height="1" fill="#88c8f4"/>
<rect x="380" y="230" width="25" height="1" fill="#88c8f4"/>
<rect x="405" y="229" width="26" height="1" fill="#88c8f4"/>
<rect x="431" y="228" width="29" height="1" fill="#88c8f4"/>
<rect x="460" y="227" width="28" height="1" fill="#88c8f4"/>
<rect x="488" y="226" width="29" height="1" fill="#88c8f4"/>
<rect x="517" y="225" width="31" height="1" fill="#88c8f4"/>
<rect x="548" y="224" width="32" height="1" fill="#88c8f4"/>
<rect x="580" y="223" width="13" height="1" fill="#88c8f4"/>
<rect x="189" y="127" width="1" height="128" fill="#000"/>
<rect x="622" y="127" width="2" height="128" fill="#000"/>
<rect x="189" y="127" width="435" height="2" fill="#000"/>
<rect x="186" y="228" width="3" height="1" fill="#000"/>
<rect x="186" y="203" width="3" height="1" fill="#000"/>
<rect x="186" y="178" width="3" height="1" fill="#000"/>
<rect x="186" y="153" width="3" height="1" fill="#000"/>
<rect x="186" y="128" width="3" height="1" fill="#000"/>
<rect x="624" y="247" width="3" height="1" fill="#707070"/>
<rect x="624" y="240" width="3" height="1" fill="#000"/>
<rect x="624" y="233" width="3" height="1" fill="#707070"/>
<rect x="624" y="226" width="3" height="1" fill="#000"/>
<rect x="624" y="219" width="3" height="1" fill="#707070"/>
<rect x="624" y="212" width="3" height="1" fill="#000"/>
<rect x="624" y="205" width="3" height="1" fill="#707070"/>
<rect x="624" y="198" width="3" height="1" fill="#000"/>
<rect x="624" y="191" width="3" height="1" fill="#707070"/>
<rect x="624" y="184" width="3" height="1" fill="#000"/>
<rect x="624" y="177" width="3" height="1" fill="#707070"/>
<rect x="624" y="170" width="3" height="1" fill="#000"/>
<rect x="624" y="163" width="3" height="1" fill="#707070"/>
<rect x="624" y="156" width="3" height="1" fill="#000"/>
<rect x="624" y="149" width="3" height="1" fill="#707070"/>
<rect x="624" y="142" width="3" height="1" fill="#000"/>
<rect x="624" y="135" width="3" height="1" fill="#707070"/>
<rect x="624" y="128" width="3" height="1" fill="#000"/>
<rect x="190" y="254" width="1" height="1" fill="#000"/>
<rect x="233" y="254" width="1" height="1" fill="#000"/>
<rect x="276" y="254" width="1" height="1" fill="#000"/>
<rect x="319" y="254" width="1" height="1" fill="#000"/>
<rect x="362" y="254" width="1" height="1" fill="#000"/>
<rect x="406" y="254" width="1" height="1" fill="#000"/>
<rect x="449" y="254" width="1" height="1" fill="#000"/>
<rect x="492" y="254" width="1" height="1" fill="#000"/>
<rect x="535" y="254" width="1" height="1" fill="#000"/>
<rect x="578" y="254" width="1" height="1" fill="#000"/>
<rect x="622" y="254" width="1" height="1" fill="#000"/>
<rect x="190" y="283" width="433" height="127" fill="url(#pbg)"/>
<rect x="190" y="397" width="433" height="1" fill="#1c1c1c"/>
<rect x="190" y="384" width="433" height="1" fill="#1c1c1c"/>
<rect x="190" y="372" width="433" height="1" fill="#1c1c1c"/>
<rect x="190" y="359" width="433" height="1" fill="#1c1c1c"/>
<rect x="190" y="347" width="433" height="1" fill="#1c1c1c"/>
<rect x="190" y="334" width="433" height="1" fill="#1c1c1c"/>
<rect x="190" y="322" width="433" height="1" fill="#1c1c1c"/>
<rect x="190" y="309" width="433" height="1" fill="#1c1c1c"/>
<rect x="190" y="297" width="433" height="1" fill="#1c1c1c"/>
<rect x="190" y="409" width="433" height="1" fill="#1c1c1c"/>
<rect x="190" y="283" width="1" height="127" fill="#1c1c1c"/>
<rect x="198" y="283" width="1" height="127" fill="#4e4e4e"/>
<rect x="207" y="283" width="1" height="127" fill="#4e4e4e"/>
<rect x="215" y="283" width="1" height="127" fill="#4e4e4e"/>
<rect x="224" y="283" width="1" height="127" fill="#4e4e4e"/>
<rect x="233" y="283" width="1" height="127" fill="#1c1c1c"/>
<rect x="241" y="283" width="1" height="127" fill="#4e4e4e"/>
<rect x="250" y="283" width="1" height="127" fill="#4e4e4e"/>
<rect x="259" y="283" width="1" height="127" fill="#4e4e4e"/>
<rect x="267" y="283" width="1" height="127" fill="#4e4e4e"/>
<rect x="276" y="283" width="1" height="127" fill="#1c1c1c"/>
<rect x="285" y="283" width="1" height="127" fill="#4e4e4e"/>
<rect x="293" y="283" width="1" height="127" fill="#4e4e4e"/>
<rect x="302" y="283" width="1" height="127" fill="#4e4e4e"/>
<rect x="310" y="283" width="1" height="127" fill="#4e4e4e"/>
<rect x="319" y="283" width="1" height="127" fill="#1c1c1c"/>
<rect x="328" y="283" width="1" height="127" fill="#4e4e4e"/>
<rect x="336" y="283" width="1" height="127" fill="#4e4e4e"/>
<rect x="345" y="283" width="1" height="127" fill="#4e4e4e"/>
<rect x="354" y="283" width="1" height="127" fill="#4e4e4e"/>
<rect x="362" y="283" width="1" height="127" fill="#1c1c1c"/>
<rect x="371" y="283" width="1" height="127" fill="#4e4e4e"/>
<rect x="380" y="283" width="1" height="127" fill="#4e4e4e"/>
<rect x="388" y="283" width="1" height="127" fill="#4e4e4e"/>
<rect x="397" y="283" width="1" height="127" fill="#4e4e4e"/>
<rect x="406" y="283" width="1" height="127" fill="#1c1c1c"/>
<rect x="414" y="283" width="1" height="127" fill="#4e4e4e"/>
<rect x="423" y="283" width="1" height="127" fill="#4e4e4e"/>
<rect x="431" y="283" width="1" height="127" fill="#4e4e4e"/>
<rect x="440" y="283" width="1" height="127" fill="#4e4e4e"/>
<rect x="449" y="283" width="1" height="127" fill="#1c1c1c"/>
<rect x="457" y="283" width="1" height="127" fill="#4e4e4e"/>
<rect x="466" y="283" width="1" height="127" fill="#4e4e4e"/>
<rect x="475" y="283" width="1" height="127" fill="#4e4e4e"/>
<rect x="483" y="283" width="1" height="127" fill="#4e4e4e"/>
<rect x="492" y="283" width="1" height="127" fill="#1c1c1c"/>
<rect x="501" y="283" width="1" height="127" fill="#4e4e4e"/>
<rect x="509" y="283" width="1" height="127" fill="#4e4e4e"/>
<rect x="518" y="283" width="1" height="127" fill="#4e4e4e"/>
<rect x="526" y="283" width="1" height="127" fill="#4e4e4e"/>
<rect x="535" y="283" width="1" height="127" fill="#1c1c1c"/>
<rect x="544" y="283" width="1" height="127" fill="#4e4e4e"/>
<rect x="552" y="283" width="1" height="127" fill="#4e4e4e"/>
<rect x="561" y="283" width="1" height="127" fill="#4e4e4e"/>
<rect x="570" y="283" width="1" height="127" fill="#4e4e4e"/>
<rect x="578" y="283" width="1" height="127" fill="#1c1c1c"/>
<rect x="587" y="283" width="1" height="127" fill="#4e4e4e"/>
<rect x="596" y="283" width="1" height="127" fill="#4e4e4e"/>
<rect x="604" y="283" width="1" height="127" fill="#4e4e4e"/>
<rect x="613" y="283" width="1" height="127" fill="#4e4e4e"/>
<rect x="592" y="285" width="1" height="125" fill="#38c8f0"/>
<rect x="190" y="397" width="1" height="13" fill="#00c000"/>
<rect x="191" y="397" width="1" height="13" fill="#00c000"/>
<rect x="192" y="397" width="1" height="13" fill="#00c000"/>
<rect x="193" y="397" width="1" height="13" fill="#00c000"/>
<rect x="194" y="397" width="1" height="13" fill="#00c000"/>
<rect x="195" y="397" width="1" height="13" fill="#00c000"/>
<rect x="196" y="397" width="1" height="13" fill="#00c000"/>
<rect x="197" y="397" width="1" height="13" fill="#00c000"/>
<rect x="198" y="397" width="1" height="13" fill="#00c000"/>
<rect x="199" y="397" width="1" height="13" fill="#00c000"/>
<rect x="200" y="397" width="1" height="13" fill="#00c000"/>
<rect x="201" y="397" width="1" height="13" fill="#00c000"/>
<rect x="202" y="397" width="1" height="13" fill="#00c000"/>
<rect x="203" y="397" width="1" height="13" fill="#00c000"/>
<rect x="204" y="397" width="1" height="13" fill="#00c000"/>
<rect x="205" y="397" width="1" height="13" fill="#00c000"/>
<rect x="206" y="397" width="1" height="13" fill="#00c000"/>
<rect x="207" y="397" width="1" height="13" fill="#00c000"/>
<rect x="208" y="397" width="1" height="13" fill="#00c000"/>
<rect x="209" y="397" width="1" height="13" fill="#00c000"/>
<rect x="210" y="397" width="1" height="13" fill="#00c000"/>
<rect x="211" y="397" width="1" height="13" fill="#00c000"/>
<rect x="212" y="397" width="1" height="13" fill="#00c000"/>
<rect x="213" y="397" width="1" height="13" fill="#00c000"/>
<rect x="214" y="397" width="1" height="13" fill="#00c000"/>
<rect x="216" y="397" width="1" height="13" fill="#00c000"/>
<rect x="217" y="397" width="1" height="13" fill="#00c000"/>
<rect x="218" y="397" width="1" height="13" fill="#00c000"/>
<rect x="219" y="397" width="1" height="13" fill="#00c000"/>
<rect x="220" y="397" width="1" height="13" fill="#00c000"/>
<rect x="221" y="397" width="1" height="13" fill="#00c000"/>
<rect x="222" y="397" width="1" height="13" fill="#00c000"/>
<rect x="223" y="397" width="1" height="13" fill="#00c000"/>
<rect x="224" y="397" width="1" height="13" fill="#00c000"/>
<rect x="225" y="397" width="1" height="13" fill="#00c000"/>
<rect x="226" y="397" width="1" height="13" fill="#00c000"/>
<rect x="227" y="397" width="1" height="13" fill="#00c000"/>
<rect x="228" y="397" width="1" height="13" fill="#00c000"/>
<rect x="229" y="397" width="1" height="13" fill="#00c000"/>
<rect x="230" y="397" width="1" height="13" fill="#00c000"/>
<rect x="231" y="397" width="1" height="13" fill="#00c000"/>
<rect x="232" y="397" width="1" height="13" fill="#00c000"/>
<rect x="233" y="397" width="1" height="13" fill="#00c000"/>
<rect x="234" y="397" width="1" height="13" fill="#00c000"/>
<rect x="235" y="397" width="1" height="13" fill="#00c000"/>
<rect x="236" y="397" width="1" height="13" fill="#00c000"/>
<rect x="237" y="397" width="1" height="13" fill="#00c000"/>
<rect x="238" y="397" width="1" height="13" fill="#00c000"/>
<rect x="239" y="397" width="1" height="13" fill="#00c000"/>
<rect x="240" y="397" width="1" height="13" fill="#00c000"/>
<rect x="241" y="397" width="1" height="13" fill="#00c000"/>
<rect x="242" y="397" width="1" height="13" fill="#00c000"/>
<rect x="243" y="397" width="1" height="13" fill="#00c000"/>
<rect x="244" y="397" width="1" height="13" fill="#00c000"/>
<rect x="245" y="397" width="1" height="13" fill="#00c000"/>
<rect x="246" y="397" width="1" height="13" fill="#00c000"/>
<rect x="247" y="397" width="1" height="13" fill="#00c000"/>
<rect x="248" y="397" width="1" height="13" fill="#00c000"/>
<rect x="249" y="397" width="1" height="13" fill="#00c000"/>
<rect x="250" y="397" width="1" height="13" fill="#00c000"/>
<rect x="251" y="397" width="1" height="13" fill="#00c000"/>
<rect x="252" y="397" width="1" height="13" fill="#00c000"/>
<rect x="253" y="397" width="1" height="13" fill="#00c000"/>
<rect x="255" y="397" width="1" height="13" fill="#00c000"/>
<rect x="256" y="397" width="1" height="13" fill="#00c000"/>
<rect x="257" y="397" width="1" height="13" fill="#00c000"/>
<rect x="258" y="397" width="1" height="13" fill="#00c000"/>
<rect x="259" y="397" width="1" height="13" fill="#00c000"/>
<rect x="260" y="397" width="1" height="13" fill="#00c000"/>
<rect x="261" y="397" width="1" height="13" fill="#00c000"/>
<rect x="262" y="397" width="1" height="13" fill="#00c000"/>
<rect x="263" y="397" width="1" height="13" fill="#00c000"/>
<rect x="264" y="397" width="1" height="13" fill="#00c000"/>
<rect x="265" y="397" width="1" height="13" fill="#00c000"/>
<rect x="266" y="397" width="1" height="13" fill="#00c000"/>
<rect x="267" y="397" width="1" height="13" fill="#00c000"/>
<rect x="268" y="397" width="1" height="13" fill="#00c000"/>
<rect x="269" y="397" width="1" height="13" fill="#00c000"/>
<rect x="270" y="397" width="1" height="13" fill="#00c000"/>
<rect x="271" y="397" width="1" height="13" fill="#00c000"/>
<rect x="272" y="397" width="1" height="13" fill="#00c000"/>
<rect x="273" y="397" width="1" height="13" fill="#00c000"/>
<rect x="274" y="397" width="1" height="13" fill="#00c000"/>
<rect x="275" y="397" width="1" height="13" fill="#00c000"/>
<rect x="276" y="397" width="1" height="13" fill="#00c000"/>
<rect x="277" y="397" width="1" height="13" fill="#00c000"/>
<rect x="278" y="397" width="1" height="13" fill="#00c000"/>
<rect x="279" y="397" width="1" height="13" fill="#00c000"/>
<rect x="280" y="397" width="1" height="13" fill="#00c000"/>
<rect x="281" y="397" width="1" height="13" fill="#00c000"/>
<rect x="282" y="397" width="1" height="13" fill="#00c000"/>
<rect x="283" y="397" width="1" height="13" fill="#00c000"/>
<rect x="284" y="397" width="1" height="13" fill="#00c000"/>
<rect x="285" y="397" width="1" height="13" fill="#00c000"/>
<rect x="286" y="397" width="1" height="13" fill="#00c000"/>
<rect x="287" y="397" width="1" height="13" fill="#00c000"/>
<rect x="288" y="397" width="1" height="13" fill="#00c000"/>
<rect x="289" y="397" width="1" height="13" fill="#00c000"/>
<rect x="290" y="397" width="1" height="13" fill="#00c000"/>
<rect x="291" y="397" width="1" height="13" fill="#00c000"/>
<rect x="292" y="397" width="1" height="13" fill="#00c000"/>
<rect x="293" y="397" width="1" height="13" fill="#00c000"/>
<rect x="294" y="397" width="1" height="13" fill="#00c000"/>
<rect x="295" y="397" width="1" height="13" fill="#00c000"/>
<rect x="297" y="397" width="1" height="13" fill="#00c000"/>
<rect x="298" y="397" width="1" height="13" fill="#00c000"/>
<rect x="299" y="397" width="1" height="13" fill="#00c000"/>
<rect x="300" y="397" width="1" height="13" fill="#00c000"/>
<rect x="301" y="397" width="1" height="13" fill="#00c000"/>
<rect x="302" y="397" width="1" height="13" fill="#00c000"/>
<rect x="303" y="397" width="1" height="13" fill="#00c000"/>
<rect x="304" y="397" width="1" height="13" fill="#00c000"/>
<rect x="305" y="397" width="1" height="13" fill="#00c000"/>
<rect x="306" y="397" width="1" height="13" fill="#00c000"/>
<rect x="307" y="397" width="1" height="13" fill="#00c000"/>
<rect x="309" y="397" width="1" height="13" fill="#00c000"/>
<rect x="310" y="397" width="1" height="13" fill="#00c000"/>
<rect x="311" y="397" width="1" height="13" fill="#00c000"/>
<rect x="312" y="397" width="1" height="13" fill="#00c000"/>
<rect x="313" y="397" width="1" height="13" fill="#00c000"/>
<rect x="314" y="397" width="1" height="13" fill="#00c000"/>
<rect x="315" y="397" width="1" height="13" fill="#00c000"/>
<rect x="316" y="397" width="1" height="13" fill="#00c000"/>
<rect x="317" y="397" width="1" height="13" fill="#00c000"/>
<rect x="318" y="397" width="1" height="13" fill="#00c000"/>
<rect x="319" y="397" width="1" height="13" fill="#00c000"/>
<rect x="320" y="397" width="1" height="13" fill="#00c000"/>
<rect x="321" y="397" width="1" height="13" fill="#00c000"/>
<rect x="322" y="397" width="1" height="13" fill="#00c000"/>
<rect x="323" y="397" width="1" height="13" fill="#00c000"/>
<rect x="324" y="397" width="1" height="13" fill="#00c000"/>
<rect x="325" y="397" width="1" height="13" fill="#00c000"/>
<rect x="326" y="397" width="1" height="13" fill="#00c000"/>
<rect x="327" y="397" width="1" height="13" fill="#00c000"/>
<rect x="328" y="397" width="1" height="13" fill="#00c000"/>
<rect x="329" y="397" width="1" height="13" fill="#00c000"/>
<rect x="330" y="397" width="1" height="13" fill="#00c000"/>
<rect x="331" y="397" width="1" height="13" fill="#00c000"/>
<rect x="332" y="397" width="1" height="13" fill="#00c000"/>
<rect x="333" y="397" width="1" height="13" fill="#00c000"/>
<rect x="334" y="397" width="1" height="13" fill="#00c000"/>
<rect x="335" y="397" width="1" height="13" fill="#00c000"/>
<rect x="336" y="397" width="1" height="13" fill="#00c000"/>
<rect x="337" y="397" width="1" height="13" fill="#00c000"/>
<rect x="339" y="397" width="1" height="13" fill="#00c000"/>
<rect x="340" y="397" width="1" height="13" fill="#00c000"/>
<rect x="341" y="397" width="1" height="13" fill="#00c000"/>
<rect x="342" y="397" width="1" height="13" fill="#00c000"/>
<rect x="343" y="397" width="1" height="13" fill="#00c000"/>
<rect x="344" y="397" width="1" height="13" fill="#00c000"/>
<rect x="345" y="397" width="1" height="13" fill="#00c000"/>
<rect x="347" y="397" width="1" height="13" fill="#00c000"/>
<rect x="348" y="397" width="1" height="13" fill="#00c000"/>
<rect x="349" y="397" width="1" height="13" fill="#00c000"/>
<rect x="350" y="397" width="1" height="13" fill="#00c000"/>
<rect x="351" y="397" width="1" height="13" fill="#00c000"/>
<rect x="352" y="397" width="1" height="13" fill="#00c000"/>
<rect x="353" y="397" width="1" height="13" fill="#00c000"/>
<rect x="354" y="397" width="1" height="13" fill="#00c000"/>
<rect x="355" y="397" width="1" height="13" fill="#00c000"/>
<rect x="356" y="397" width="1" height="13" fill="#00c000"/>
<rect x="357" y="397" width="1" height="13" fill="#00c000"/>
<rect x="358" y="397" width="1" height="13" fill="#00c000"/>
<rect x="359" y="397" width="1" height="13" fill="#00c000"/>
<rect x="360" y="397" width="1" height="13" fill="#00c000"/>
<rect x="361" y="397" width="1" height="13" fill="#00c000"/>
<rect x="362" y="397" width="1" height="13" fill="#00c000"/>
<rect x="363" y="397" width="1" height="13" fill="#00c000"/>
<rect x="364" y="397" width="1" height="13" fill="#00c000"/>
<rect x="365" y="397" width="1" height="13" fill="#00c000"/>
<rect x="366" y="397" width="1" height="13" fill="#00c000"/>
<rect x="367" y="397" width="1" height="13" fill="#00c000"/>
<rect x="368" y="397" width="1" height="13" fill="#00c000"/>
<rect x="369" y="397" width="1" height="13" fill="#00c000"/>
<rect x="370" y="397" width="1" height="13" fill="#00c000"/>
<rect x="371" y="397" width="1" height="13" fill="#00c000"/>
<rect x="372" y="397" width="1" height="13" fill="#00c000"/>
<rect x="373" y="397" width="1" height="13" fill="#00c000"/>
<rect x="374" y="397" width="1" height="13" fill="#00c000"/>
<rect x="375" y="397" width="1" height="13" fill="#00c000"/>
<rect x="376" y="397" width="1" height="13" fill="#00c000"/>
<rect x="377" y="397" width="1" height="13" fill="#00c000"/>
<rect x="378" y="397" width="1" height="13" fill="#00c000"/>
<rect x="379" y="397" width="1" height="13" fill="#00c000"/>
<rect x="381" y="397" width="1" height="13" fill="#00c000"/>
<rect x="382" y="397" width="1" height="13" fill="#00c000"/>
<rect x="383" y="397" width="1" height="13" fill="#00c000"/>
<rect x="384" y="397" width="1" height="13" fill="#00c000"/>
<rect x="385" y="397" width="1" height="13" fill="#00c000"/>
<rect x="386" y="397" width="1" height="13" fill="#00c000"/>
<rect x="389" y="397" width="1" height="13" fill="#00c000"/>
<rect x="390" y="397" width="1" height="13" fill="#00c000"/>
<rect x="391" y="397" width="1" height="13" fill="#00c000"/>
<rect x="392" y="397" width="1" height="13" fill="#00c000"/>
<rect x="394" y="397" width="1" height="13" fill="#00c000"/>
<rect x="395" y="397" width="1" height="13" fill="#00c000"/>
<rect x="396" y="397" width="1" height="13" fill="#00c000"/>
<rect x="397" y="397" width="1" height="13" fill="#00c000"/>
<rect x="398" y="397" width="1" height="13" fill="#00c000"/>
<rect x="399" y="397" width="1" height="13" fill="#00c000"/>
<rect x="400" y="397" width="1" height="13" fill="#00c000"/>
<rect x="401" y="397" width="1" height="13" fill="#00c000"/>
<rect x="402" y="397" width="1" height="13" fill="#00c000"/>
<rect x="403" y="397" width="1" height="13" fill="#00c000"/>
<rect x="404" y="397" width="1" height="13" fill="#00c000"/>
<rect x="405" y="397" width="1" height="13" fill="#00c000"/>
<rect x="406" y="397" width="1" height="13" fill="#00c000"/>
<rect x="407" y="397" width="1" height="13" fill="#00c000"/>
<rect x="408" y="397" width="1" height="13" fill="#00c000"/>
<rect x="409" y="397" width="1" height="13" fill="#00c000"/>
<rect x="410" y="397" width="1" height="13" fill="#00c000"/>
<rect x="411" y="397" width="1" height="13" fill="#00c000"/>
<rect x="412" y="397" width="1" height="13" fill="#00c000"/>
<rect x="413" y="397" width="1" height="13" fill="#00c000"/>
<rect x="414" y="397" width="1" height="13" fill="#00c000"/>
<rect x="416" y="397" width="1" height="13" fill="#00c000"/>
<rect x="417" y="397" width="1" height="13" fill="#00c000"/>
<rect x="418" y="397" width="1" height="13" fill="#00c000"/>
<rect x="419" y="397" width="1" height="13" fill="#00c000"/>
<rect x="420" y="397" width="1" height="13" fill="#00c000"/>
<rect x="421" y="397" width="1" height="13" fill="#00c000"/>
<rect x="422" y="397" width="1" height="13" fill="#00c000"/>
<rect x="423" y="397" width="1" height="13" fill="#00c000"/>
<rect x="424" y="397" width="1" height="13" fill="#00c000"/>
<rect x="425" y="397" width="1" height="13" fill="#00c000"/>
<rect x="426" y="397" width="1" height="13" fill="#00c000"/>
<rect x="427" y="397" width="1" height="13" fill="#00c000"/>
<rect x="428" y="397" width="1" height="13" fill="#00c000"/>
<rect x="429" y="397" width="1" height="13" fill="#00c000"/>
<rect x="430" y="397" width="1" height="13" fill="#00c000"/>
<rect x="432" y="397" width="1" height="13" fill="#00c000"/>
<rect x="433" y="397" width="1" height="13" fill="#00c000"/>
<rect x="434" y="397" width="1" height="13" fill="#00c000"/>
<rect x="435" y="397" width="1" height="13" fill="#00c000"/>
<rect x="436" y="397" width="1" height="13" fill="#00c000"/>
<rect x="437" y="397" width="1" height="13" fill="#00c000"/>
<rect x="438" y="397" width="1" height="13" fill="#00c000"/>
<rect x="439" y="397" width="1" height="13" fill="#00c000"/>
<rect x="440" y="397" width="1" height="13" fill="#00c000"/>
<rect x="441" y="397" width="1" height="13" fill="#00c000"/>
<rect x="443" y="397" width="1" height="13" fill="#00c000"/>
<rect x="444" y="397" width="1" height="13" fill="#00c000"/>
<rect x="445" y="397" width="1" height="13" fill="#00c000"/>
<rect x="446" y="397" width="1" height="13" fill="#00c000"/>
<rect x="447" y="397" width="1" height="13" fill="#00c000"/>
<rect x="448" y="397" width="1" height="13" fill="#00c000"/>
<rect x="449" y="397" width="1" height="13" fill="#00c000"/>
<rect x="450" y="397" width="1" height="13" fill="#00c000"/>
<rect x="451" y="397" width="1" height="13" fill="#00c000"/>
<rect x="452" y="397" width="1" height="13" fill="#00c000"/>
<rect x="453" y="397" width="1" height="13" fill="#00c000"/>
<rect x="454" y="397" width="1" height="13" fill="#00c000"/>
<rect x="455" y="397" width="1" height="13" fill="#00c000"/>
<rect x="456" y="397" width="1" height="13" fill="#00c000"/>
<rect x="457" y="397" width="1" height="13" fill="#00c000"/>
<rect x="458" y="397" width="1" height="13" fill="#00c000"/>
<rect x="459" y="397" width="1" height="13" fill="#00c000"/>
<rect x="460" y="397" width="1" height="13" fill="#00c000"/>
<rect x="461" y="397" width="1" height="13" fill="#00c000"/>
<rect x="462" y="397" width="1" height="13" fill="#00c000"/>
<rect x="463" y="397" width="1" height="13" fill="#00c000"/>
<rect x="464" y="397" width="1" height="13" fill="#00c000"/>
<rect x="465" y="397" width="1" height="13" fill="#00c000"/>
<rect x="466" y="397" width="1" height="13" fill="#00c000"/>
<rect x="467" y="397" width="1" height="13" fill="#00c000"/>
<rect x="468" y="397" width="1" height="13" fill="#00c000"/>
<rect x="469" y="397" width="1" height="13" fill="#00c000"/>
<rect x="470" y="397" width="1" height="13" fill="#00c000"/>
<rect x="471" y="397" width="1" height="13" fill="#00c000"/>
<rect x="472" y="397" width="1" height="13" fill="#00c000"/>
<rect x="473" y="397" width="1" height="13" fill="#00c000"/>
<rect x="474" y="397" width="1" height="13" fill="#00c000"/>
<rect x="475" y="397" width="1" height="13" fill="#00c000"/>
<rect x="476" y="397" width="1" height="13" fill="#00c000"/>
<rect x="477" y="397" width="1" height="13" fill="#00c000"/>
<rect x="478" y="397" width="1" height="13" fill="#00c000"/>
<rect x="479" y="397" width="1" height="13" fill="#00c000"/>
<rect x="480" y="397" width="1" height="13" fill="#00c000"/>
<rect x="481" y="397" width="1" height="13" fill="#00c000"/>
<rect x="482" y="397" width="1" height="13" fill="#00c000"/>
<rect x="483" y="397" width="1" height="13" fill="#00c000"/>
<rect x="484" y="397" width="1" height="13" fill="#00c000"/>
<rect x="485" y="397" width="1" height="13" fill="#00c000"/>
<rect x="486" y="397" width="1" height="13" fill="#00c000"/>
<rect x="487" y="397" width="1" height="13" fill="#00c000"/>
<rect x="488" y="397" width="1" height="13" fill="#00c000"/>
<rect x="489" y="397" width="1" height="13" fill="#00c000"/>
<rect x="490" y="397" width="1" height="13" fill="#00c000"/>
<rect x="491" y="397" width="1" height="13" fill="#00c000"/>
<rect x="492" y="397" width="1" height="13" fill="#00c000"/>
<rect x="493" y="397" width="1" height="13" fill="#00c000"/>
<rect x="494" y="397" width="1" height="13" fill="#00c000"/>
<rect x="495" y="397" width="1" height="13" fill="#00c000"/>
<rect x="496" y="397" width="1" height="13" fill="#00c000"/>
<rect x="497" y="397" width="1" height="13" fill="#00c000"/>
<rect x="498" y="397" width="1" height="13" fill="#00c000"/>
<rect x="499" y="397" width="1" height="13" fill="#00c000"/>
<rect x="500" y="397" width="1" height="13" fill="#00c000"/>
<rect x="501" y="397" width="1" height="13" fill="#00c000"/>
<rect x="502" y="397" width="1" height="13" fill="#00c000"/>
<rect x="503" y="397" width="1" height="13" fill="#00c000"/>
<rect x="504" y="397" width="1" height="13" fill="#00c000"/>
<rect x="505" y="397" width="1" height="13" fill="#00c000"/>
<rect x="506" y="397" width="1" height="13" fill="#00c000"/>
<rect x="507" y="397" width="1" height="13" fill="#00c000"/>
<rect x="508" y="397" width="1" height="13" fill="#00c000"/>
<rect x="509" y="397" width="1" height="13" fill="#00c000"/>
<rect x="510" y="397" width="1" height="13" fill="#00c000"/>
<rect x="511" y="397" width="1" height="13" fill="#00c000"/>
<rect x="512" y="397" width="1" height="13" fill="#00c000"/>
<rect x="513" y="397" width="1" height="13" fill="#00c000"/>
<rect x="514" y="397" width="1" height="13" fill="#00c000"/>
<rect x="515" y="397" width="1" height="13" fill="#00c000"/>
<rect x="516" y="397" width="1" height="13" fill="#00c000"/>
<rect x="517" y="397" width="1" height="13" fill="#00c000"/>
<rect x="518" y="397" width="1" height="13" fill="#00c000"/>
<rect x="519" y="397" width="1" height="13" fill="#00c000"/>
<rect x="520" y="397" width="1" height="13" fill="#00c000"/>
<rect x="521" y="397" width="1" height="13" fill="#00c000"/>
<rect x="522" y="397" width="1" height="13" fill="#00c000"/>
<rect x="523" y="397" width="1" height="13" fill="#00c000"/>
<rect x="524" y="397" width="1" height="13" fill="#00c000"/>
<rect x="525" y="397" width="1" height="13" fill="#00c000"/>
<rect x="526" y="397" width="1" height="13" fill="#00c000"/>
<rect x="527" y="397" width="1" height="13" fill="#00c000"/>
<rect x="528" y="397" width="1" height="13" fill="#00c000"/>
<rect x="529" y="397" width="1" height="13" fill="#00c000"/>
<rect x="530" y="397" width="1" height="13" fill="#00c000"/>
<rect x="531" y="397" width="1" height="13" fill="#00c000"/>
<rect x="532" y="397" width="1" height="13" fill="#00c000"/>
<rect x="533" y="397" width="1" height="13" fill="#00c000"/>
<rect x="534" y="397" width="1" height="13" fill="#00c000"/>
<rect x="535" y="397" width="1" height="13" fill="#00c000"/>
<rect x="536" y="397" width="1" height="13" fill="#00c000"/>
<rect x="537" y="397" width="1" height="13" fill="#00c000"/>
<rect x="539" y="397" width="1" height="13" fill="#00c000"/>
<rect x="540" y="397" width="1" height="13" fill="#00c000"/>
<rect x="541" y="397" width="1" height="13" fill="#00c000"/>
<rect x="542" y="397" width="1" height="13" fill="#00c000"/>
<rect x="543" y="397" width="1" height="13" fill="#00c000"/>
<rect x="544" y="397" width="1" height="13" fill="#00c000"/>
<rect x="545" y="397" width="1" height="13" fill="#00c000"/>
<rect x="546" y="397" width="1" height="13" fill="#00c000"/>
<rect x="547" y="397" width="1" height="13" fill="#00c000"/>
<rect x="548" y="397" width="1" height="13" fill="#00c000"/>
<rect x="549" y="397" width="1" height="13" fill="#00c000"/>
<rect x="550" y="397" width="1" height="13" fill="#00c000"/>
<rect x="551" y="397" width="1" height="13" fill="#00c000"/>
<rect x="552" y="397" width="1" height="13" fill="#00c000"/>
<rect x="553" y="397" width="1" height="13" fill="#00c000"/>
<rect x="554" y="397" width="1" height="13" fill="#00c000"/>
<rect x="555" y="397" width="1" height="13" fill="#00c000"/>
<rect x="556" y="397" width="1" height="13" fill="#00c000"/>
<rect x="557" y="397" width="1" height="13" fill="#00c000"/>
<rect x="558" y="397" width="1" height="13" fill="#00c000"/>
<rect x="559" y="397" width="1" height="13" fill="#00c000"/>
<rect x="560" y="397" width="1" height="13" fill="#00c000"/>
<rect x="561" y="397" width="1" height="13" fill="#00c000"/>
<rect x="562" y="397" width="1" height="13" fill="#00c000"/>
<rect x="563" y="397" width="1" height="13" fill="#00c000"/>
<rect x="564" y="397" width="1" height="13" fill="#00c000"/>
<rect x="565" y="397" width="1" height="13" fill="#00c000"/>
<rect x="566" y="397" width="1" height="13" fill="#00c000"/>
<rect x="567" y="397" width="1" height="13" fill="#00c000"/>
<rect x="568" y="397" width="1" height="13" fill="#00c000"/>
<rect x="569" y="397" width="1" height="13" fill="#00c000"/>
<rect x="570" y="397" width="1" height="13" fill="#00c000"/>
<rect x="571" y="397" width="1" height="13" fill="#00c000"/>
<rect x="572" y="397" width="1" height="13" fill="#00c000"/>
<rect x="573" y="397" width="1" height="13" fill="#00c000"/>
<rect x="574" y="397" width="1" height="13" fill="#00c000"/>
<rect x="575" y="397" width="1" height="13" fill="#00c000"/>
<rect x="576" y="397" width="1" height="13" fill="#00c000"/>
<rect x="577" y="397" width="1" height="13" fill="#00c000"/>
<rect x="578" y="397" width="1" height="13" fill="#00c000"/>
<rect x="579" y="397" width="1" height="13" fill="#00c000"/>
<rect x="580" y="397" width="1" height="13" fill="#00c000"/>
<rect x="581" y="397" width="1" height="13" fill="#00c000"/>
<rect x="582" y="397" width="1" height="13" fill="#00c000"/>
<rect x="583" y="397" width="1" height="13" fill="#00c000"/>
<rect x="584" y="397" width="1" height="13" fill="#00c000"/>
<rect x="585" y="397" width="1" height="13" fill="#00c000"/>
<rect x="586" y="397" width="1" height="13" fill="#00c000"/>
<rect x="587" y="397" width="1" height="13" fill="#00c000"/>
<rect x="588" y="397" width="1" height="13" fill="#00c000"/>
<rect x="589" y="397" width="1" height="13" fill="#00c000"/>
<rect x="590" y="397" width="1" height="13" fill="#00c000"/>
<rect x="591" y="397" width="1" height="13" fill="#00c000"/>
<rect x="592" y="397" width="1" height="13" fill="#00c000"/>
<rect x="190" y="384" width="1" height="26" fill="#00c000"/>
<rect x="196" y="384" width="1" height="26" fill="#00c000"/>
<rect x="197" y="384" width="1" height="26" fill="#00c000"/>
<rect x="202" y="384" width="1" height="26" fill="#00c000"/>
<rect x="203" y="384" width="1" height="26" fill="#00c000"/>
<rect x="204" y="372" width="1" height="38" fill="#00c000"/>
<rect x="236" y="372" width="1" height="38" fill="#00c000"/>
<rect x="237" y="372" width="1" height="38" fill="#00c000"/>
<rect x="247" y="384" width="1" height="26" fill="#00c000"/>
<rect x="273" y="347" width="1" height="63" fill="#00c000"/>
<rect x="277" y="372" width="1" height="38" fill="#00c000"/>
<rect x="278" y="372" width="1" height="38" fill="#00c000"/>
<rect x="279" y="384" width="1" height="26" fill="#00c000"/>
<rect x="290" y="384" width="1" height="26" fill="#00c000"/>
<rect x="292" y="384" width="1" height="26" fill="#00c000"/>
<rect x="301" y="384" width="1" height="26" fill="#00c000"/>
<rect x="321" y="384" width="1" height="26" fill="#00c000"/>
<rect x="322" y="384" width="1" height="26" fill="#00c000"/>
<rect x="375" y="384" width="1" height="26" fill="#00c000"/>
<rect x="379" y="384" width="1" height="26" fill="#00c000"/>
<rect x="397" y="384" width="1" height="26" fill="#00c000"/>
<rect x="399" y="372" width="1" height="38" fill="#00c000"/>
<rect x="413" y="384" width="1" height="26" fill="#00c000"/>
<rect x="418" y="359" width="1" height="51" fill="#00c000"/>
<rect x="440" y="372" width="1" height="38" fill="#00c000"/>
<rect x="458" y="372" width="1" height="38" fill="#00c000"/>
<rect x="459" y="359" width="1" height="51" fill="#00c000"/>
<rect x="468" y="384" width="1" height="26" fill="#00c000"/>
<rect x="516" y="384" width="1" height="26" fill="#00c000"/>
<rect x="519" y="384" width="1" height="26" fill="#00c000"/>
<rect x="523" y="384" width="1" height="26" fill="#00c000"/>
<rect x="524" y="384" width="1" height="26" fill="#00c000"/>
<rect x="528" y="384" width="1" height="26" fill="#00c000"/>
<rect x="528" y="384" width="1" height="26" fill="#00c000"/>
<rect x="535" y="372" width="1" height="38" fill="#00c000"/>
<rect x="536" y="359" width="1" height="51" fill="#00c000"/>
<rect x="540" y="384" width="1" height="26" fill="#00c000"/>
<rect x="545" y="384" width="1" height="26" fill="#00c000"/>
<rect x="559" y="384" width="1" height="26" fill="#00c000"/>
<rect x="562" y="372" width="1" height="38" fill="#00c000"/>
<rect x="563" y="372" width="1" height="38" fill="#00c000"/>
<rect x="565" y="384" width="1" height="26" fill="#00c000"/>
<rect x="566" y="384" width="1" height="26" fill="#00c000"/>
<rect x="575" y="384" width="1" height="26" fill="#00c000"/>
<rect x="267" y="334" width="1" height="76" fill="#70cc08"/>
<rect x="268" y="309" width="1" height="101" fill="#70cc08"/>
<rect x="269" y="309" width="1" height="101" fill="#70cc08"/>
<rect x="270" y="309" width="1" height="101" fill="#70cc08"/>
<rect x="271" y="322" width="1" height="88" fill="#70cc08"/>
<rect x="495" y="334" width="1" height="76" fill="#70cc08"/>
<rect x="190" y="410" width="400" height="1" fill="#e8c8e8"/>
<rect x="189" y="283" width="1" height="127" fill="#000"/>
<rect x="622" y="283" width="2" height="127" fill="#000"/>
<rect x="189" y="283" width="435" height="2" fill="#000"/>
<rect x="186" y="397" width="3" height="1" fill="#000"/>
<rect x="186" y="384" width="3" height="1" fill="#000"/>
<rect x="186" y="372" width="3" height="1" fill="#000"/>
<rect x="186" y="359" width="3" height="1" fill="#000"/>
<rect x="186" y="347" width="3" height="1" fill="#000"/>
<rect x="186" y="334" width="3" height="1" fill="#000"/>
<rect x="186" y="322" width="3" height="1" fill="#000"/>
<rect x="186" y="309" width="3" height="1" fill="#000"/>
<rect x="186" y="297" width="3" height="1" fill="#000"/>
<rect x="186" y="284" width="3" height="1" fill="#000"/>
</svg>
<div style="position:absolute;left:191px;top:117px;width:6px;height:8px;background:#008000"></div>
<div style="position:absolute;left:223px;top:117px;width:6px;height:8px;background:#88ccff"></div>
<div style="position:absolute;left:293px;top:117px;width:6px;height:8px;background:#ff80ff"></div>
<div style="position:absolute;left:191px;top:273px;width:6px;height:8px;background:#008000"></div>
<div style="position:absolute;left:219px;top:273px;width:6px;height:8px;background:#d0a0d0"></div>
<div style="position:absolute;left:254px;top:270px;width:6px;height:3px;background:#000;box-shadow:0 0 0 1px #fff"></div>
<div class="t" style="top:115.69px;left:200px;font-size:11px;color:#000;letter-spacing:-0.5px">LDC</div>
<div class="t" style="top:115.69px;left:231.5px;font-size:11px;color:#000;letter-spacing:-0.2px">Read speed</div>
<div class="t" style="top:115.69px;left:302px;font-size:11px;color:#000;letter-spacing:0px">Write speed</div>
<div class="t" style="top:271.69px;left:200px;font-size:11px;color:#000;letter-spacing:0px">BIS</div>
<div class="t" style="top:271.69px;left:228px;font-size:11px;color:#000;letter-spacing:0px">Jitter</div>
<div class="t" style="top:222.69px;right:475px;text-align:right;font-size:11px;color:#000;letter-spacing:0px">100</div>
<div class="t" style="top:197.69px;right:475px;text-align:right;font-size:11px;color:#000;letter-spacing:0px">200</div>
<div class="t" style="top:172.69px;right:475px;text-align:right;font-size:11px;color:#000;letter-spacing:0px">300</div>
<div class="t" style="top:147.69px;right:475px;text-align:right;font-size:11px;color:#000;letter-spacing:0px">400</div>
<div class="t" style="top:122.69px;right:475px;text-align:right;font-size:11px;color:#000;letter-spacing:0px">500</div>
<div class="t" style="top:234.69px;left:627px;font-size:11px;color:#000;letter-spacing:0px">2 X</div>
<div class="t" style="top:220.69px;left:627px;font-size:11px;color:#000;letter-spacing:0px">4 X</div>
<div class="t" style="top:206.69px;left:627px;font-size:11px;color:#000;letter-spacing:0px">6 X</div>
<div class="t" style="top:192.69px;left:627px;font-size:11px;color:#000;letter-spacing:0px">8 X</div>
<div class="t" style="top:178.69px;left:627px;font-size:11px;color:#000;letter-spacing:0px">10 X</div>
<div class="t" style="top:164.69px;left:627px;font-size:11px;color:#000;letter-spacing:0px">12 X</div>
<div class="t" style="top:150.69px;left:627px;font-size:11px;color:#000;letter-spacing:0px">14 X</div>
<div class="t" style="top:136.69px;left:627px;font-size:11px;color:#000;letter-spacing:0px">16 X</div>
<div class="t" style="top:122.69px;left:627px;font-size:11px;color:#000;letter-spacing:0px">18 X</div>
<div class="t" style="top:254.69px;left:140px;width:100px;text-align:center;font-size:11px;color:#000;letter-spacing:-0.3px">0.0</div>
<div class="t" style="top:254.69px;left:183px;width:100px;text-align:center;font-size:11px;color:#000;letter-spacing:-0.3px">2.5</div>
<div class="t" style="top:254.69px;left:226px;width:100px;text-align:center;font-size:11px;color:#000;letter-spacing:-0.3px">5.0</div>
<div class="t" style="top:254.69px;left:269px;width:100px;text-align:center;font-size:11px;color:#000;letter-spacing:-0.3px">7.5</div>
<div class="t" style="top:254.69px;left:312px;width:100px;text-align:center;font-size:11px;color:#000;letter-spacing:-0.3px">10.0</div>
<div class="t" style="top:254.69px;left:356px;width:100px;text-align:center;font-size:11px;color:#000;letter-spacing:-0.3px">12.5</div>
<div class="t" style="top:254.69px;left:399px;width:100px;text-align:center;font-size:11px;color:#000;letter-spacing:-0.3px">15.0</div>
<div class="t" style="top:254.69px;left:442px;width:100px;text-align:center;font-size:11px;color:#000;letter-spacing:-0.3px">17.5</div>
<div class="t" style="top:254.69px;left:485px;width:100px;text-align:center;font-size:11px;color:#000;letter-spacing:-0.3px">20.0</div>
<div class="t" style="top:254.69px;left:528px;width:100px;text-align:center;font-size:11px;color:#000;letter-spacing:-0.3px">22.5</div>
<div class="t" style="top:254.69px;left:602px;font-size:11px;color:#000;letter-spacing:0px">25.0 GB</div>
<div class="t" style="top:391.69px;right:475px;text-align:right;font-size:11px;color:#000;letter-spacing:0px">1</div>
<div class="t" style="top:378.69px;right:475px;text-align:right;font-size:11px;color:#000;letter-spacing:0px">2</div>
<div class="t" style="top:366.69px;right:475px;text-align:right;font-size:11px;color:#000;letter-spacing:0px">3</div>
<div class="t" style="top:353.69px;right:475px;text-align:right;font-size:11px;color:#000;letter-spacing:0px">4</div>
<div class="t" style="top:341.69px;right:475px;text-align:right;font-size:11px;color:#000;letter-spacing:0px">5</div>
<div class="t" style="top:328.69px;right:475px;text-align:right;font-size:11px;color:#000;letter-spacing:0px">6</div>
<div class="t" style="top:316.69px;right:475px;text-align:right;font-size:11px;color:#000;letter-spacing:0px">7</div>
<div class="t" style="top:303.69px;right:475px;text-align:right;font-size:11px;color:#000;letter-spacing:0px">8</div>
<div class="t" style="top:291.69px;right:475px;text-align:right;font-size:11px;color:#000;letter-spacing:0px">9</div>
<div class="t" style="top:278.69px;right:475px;text-align:right;font-size:11px;color:#000;letter-spacing:0px">10</div>
<div class="t" style="top:378.69px;left:627px;font-size:11px;color:#000;letter-spacing:0px">2%</div>
<div class="t" style="top:353.69px;left:627px;font-size:11px;color:#000;letter-spacing:0px">4%</div>
<div class="t" style="top:328.69px;left:627px;font-size:11px;color:#000;letter-spacing:0px">6%</div>
<div class="t" style="top:303.69px;left:627px;font-size:11px;color:#000;letter-spacing:0px">8%</div>
<div class="t" style="top:278.69px;left:627px;font-size:11px;color:#000;letter-spacing:0px">10%</div>
<div class="t" style="top:410.69px;left:140px;width:100px;text-align:center;font-size:11px;color:#000;letter-spacing:-0.3px">0.0</div>
<div class="t" style="top:410.69px;left:183px;width:100px;text-align:center;font-size:11px;color:#000;letter-spacing:-0.3px">2.5</div>
<div class="t" style="top:410.69px;left:226px;width:100px;text-align:center;font-size:11px;color:#000;letter-spacing:-0.3px">5.0</div>
<div class="t" style="top:410.69px;left:269px;width:100px;text-align:center;font-size:11px;color:#000;letter-spacing:-0.3px">7.5</div>
<div class="t" style="top:410.69px;left:312px;width:100px;text-align:center;font-size:11px;color:#000;letter-spacing:-0.3px">10.0</div>
<div class="t" style="top:410.69px;left:356px;width:100px;text-align:center;font-size:11px;color:#000;letter-spacing:-0.3px">12.5</div>
<div class="t" style="top:410.69px;left:399px;width:100px;text-align:center;font-size:11px;color:#000;letter-spacing:-0.3px">15.0</div>
<div class="t" style="top:410.69px;left:442px;width:100px;text-align:center;font-size:11px;color:#000;letter-spacing:-0.3px">17.5</div>
<div class="t" style="top:410.69px;left:485px;width:100px;text-align:center;font-size:11px;color:#000;letter-spacing:-0.3px">20.0</div>
<div class="t" style="top:410.69px;left:528px;width:100px;text-align:center;font-size:11px;color:#000;letter-spacing:-0.3px">22.5</div>
<div class="t" style="top:410.69px;left:602px;font-size:11px;color:#000;letter-spacing:0px">25.0 GB</div>
<div class="t" style="top:430.69px;font-size:11px;color:#000;letter-spacing:-0.6px;left:252.5px;">LDC</div>
<div class="t" style="top:430.69px;font-size:11px;color:#000;letter-spacing:-0.3px;left:309.5px;">BIS</div>
<div class="t" style="top:448.09px;font-size:11px;color:#000;letter-spacing:-0.1px;left:163px;">Avg</div>
<div class="t" style="top:463.69px;font-size:11px;color:#000;letter-spacing:-0.1px;left:163px;">Max</div>
<div class="t" style="top:479.69px;font-size:11px;color:#000;letter-spacing:-0.1px;left:161px;">Total</div>
<div class="t" style="top:448.09px;font-size:11px;color:#0000ff;letter-spacing:-0.2px;right:388px;text-align:right;">1.70</div>
<div class="t" style="top:448.09px;font-size:11px;color:#0000ff;letter-spacing:-0.2px;right:334px;text-align:right;">0.03</div>
<div class="t" style="top:463.69px;font-size:11px;color:#0000ff;letter-spacing:-0.2px;right:388px;text-align:right;">443</div>
<div class="t" style="top:463.69px;font-size:11px;color:#0000ff;letter-spacing:-0.2px;right:334px;text-align:right;">8</div>
<div class="t" style="top:479.69px;font-size:11px;color:#0000ff;right:388px;text-align:right;">649596</div>
<div class="t" style="top:479.69px;font-size:11px;color:#0000ff;letter-spacing:-0.2px;right:334px;text-align:right;">12208</div>
<svg style="position:absolute;left:394px;top:430px" width="14" height="14" viewBox="0 0 14 14"><rect x="0.5" y="0.5" width="13" height="13" fill="#fff" stroke="#333"/><path d="M3 7L6 10L11.5 3.5" stroke="#333" stroke-width="1.2" fill="none"/></svg>
<div class="t" style="top:431.69px;font-size:11px;color:#000;letter-spacing:0.1px;left:417px;">Jitter</div>
<div class="t" style="top:448.09px;font-size:11px;color:#0000ff;letter-spacing:-0.3px;right:219px;text-align:right;">-0.1%</div>
<div class="t" style="top:463.69px;font-size:11px;color:#0000ff;letter-spacing:-0.3px;right:219px;text-align:right;">0.0%</div>
<div class="t" style="top:435.69px;font-size:11px;color:#000;left:461px;">Speed</div>
<div class="t" style="top:435.69px;font-size:11px;color:#0000ff;letter-spacing:-0.2px;left:519.5px;">4.23 X</div>
<div class="t" style="top:463.89px;font-size:11px;color:#000;letter-spacing:0.4px;left:461px;">Position</div>
<div class="t" style="top:463.89px;font-size:11px;color:#0000ff;letter-spacing:-0.1px;left:519.5px;">23862 MB</div>
<div class="t" style="top:479.39px;font-size:11px;color:#000;letter-spacing:-0.1px;left:461px;">Samples</div>
<div class="t" style="top:479.39px;font-size:11px;color:#0000ff;letter-spacing:0.1px;left:519.5px;">381755</div>
<div style="position:absolute;left:575px;top:428px;width:75px;height:21px;background:#e1e1e1;border:1px solid #adadad;box-sizing:border-box"></div>
<div class="t" style="top:434.19px;font-size:11px;color:#000;letter-spacing:-0.3px;left:579px;">4.0 X</div>
<svg style="position:absolute;left:636px;top:436px" width="10" height="6" viewBox="0 0 10 6"><path d="M0.5 0.5L5 5L9.5 0.5" stroke="#404040" fill="none" stroke-width="1"/></svg>
<div style="position:absolute;left:576px;top:452px;width:73px;height:21px;background:#e1e1e1;border:1px solid #adadad;box-sizing:border-box"></div>
<div class="t" style="top:458.09px;font-size:11px;color:#000;letter-spacing:0.2px;left:512px;width:200px;text-align:center;">Start full</div>
<div style="position:absolute;left:575px;top:479px;width:73px;height:21px;background:#e1e1e1;border:1px solid #adadad;box-sizing:border-box"></div>
<div class="t" style="top:485.19px;font-size:11px;color:#000;letter-spacing:0.2px;left:511.5px;width:200px;text-align:center;">Start part</div>
<div style="position:absolute;left:1px;top:505px;width:659px;height:18px;background:#f0f0f0"></div>
<div style="position:absolute;left:1px;top:504px;width:155px;height:1px;background:#e8e8f0"></div>
<div class="t" style="top:508.44px;font-size:12px;color:#000;letter-spacing:-0.72px;left:3.6px;">Test completed</div>
<div style="position:absolute;left:141px;top:507px;width:1px;height:15px;background:#d8d8d8"></div>
<div style="position:absolute;left:146px;top:508px;width:302px;height:13px;background:#06b025;border:1px solid #bcbcbc;box-sizing:border-box"></div>
<div style="position:absolute;left:449px;top:507px;width:1px;height:15px;background:#d8d8d8"></div>
<div class="t" style="top:509.69px;font-size:11px;color:#000;letter-spacing:-0.5px;left:455px;">100.0%</div>
<div style="position:absolute;left:507px;top:507px;width:1px;height:15px;background:#d8d8d8"></div>
<div class="t" style="top:509.69px;font-size:11px;color:#000;right:32px;text-align:right;">31:23</div>
<div style="position:absolute;left:630px;top:507px;width:1px;height:15px;background:#d8d8d8"></div>
<div style="position:absolute;left:657px;top:514px;width:2px;height:2px;background:#b8b8b8"></div>
<div style="position:absolute;left:654px;top:517px;width:2px;height:2px;background:#b8b8b8"></div>
<div style="position:absolute;left:657px;top:517px;width:2px;height:2px;background:#b8b8b8"></div>
<div style="position:absolute;left:651px;top:520px;width:2px;height:2px;background:#b8b8b8"></div>
<div style="position:absolute;left:654px;top:520px;width:2px;height:2px;background:#b8b8b8"></div>
<div style="position:absolute;left:657px;top:520px;width:2px;height:2px;background:#b8b8b8"></div>
<div style="position:absolute;left:0px;top:0px;width:1px;height:524px;background:#0078d7"></div>
<div style="position:absolute;left:660px;top:0px;width:1px;height:524px;background:#0078d7"></div>
<div style="position:absolute;left:0px;top:523px;width:661px;height:1px;background:#0078d7"></div>
</body></html>
